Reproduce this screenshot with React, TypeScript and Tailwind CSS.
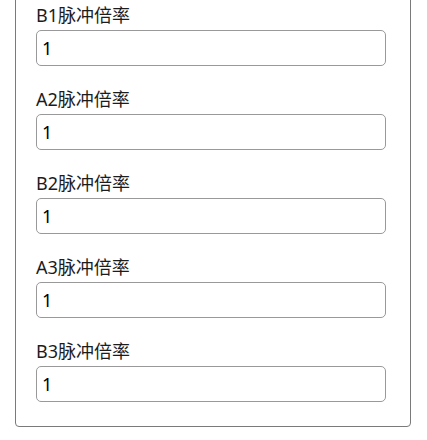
import { useState } from "react";

const fields = ["B1脉冲倍率", "A2脉冲倍率", "B2脉冲倍率", "A3脉冲倍率", "B3脉冲倍率"];

export default function App() {
  const [values, setValues] = useState<string[]>(fields.map(() => "1"));

  return (
    <div
      className="min-h-[440px] overflow-hidden bg-white px-[15px]"
      style={{ fontFamily: '"Noto Sans", "Noto Sans CJK SC", sans-serif' }}
    >
      <div className="-mt-5 w-[396px] rounded-[4px] border border-[#7a7a7a] pb-6 pl-5 pt-[22px]">
        {fields.map((label, i) => (
          <div key={label} className={i > 0 ? "mt-[21px]" : ""}>
            <div className="mb-[3px] text-[18px] leading-6 text-[#1c1c1c]">{label}</div>
            <input
              value={values[i]}
              onChange={(e) =>
                setValues((v) => v.map((x, j) => (j === i ? e.target.value : x)))
              }
              className="block h-9 w-[350px] rounded-[5px] border border-[#999] px-[5px] text-[18px] text-black outline-none"
            />
          </div>
        ))}
      </div>
    </div>
  );
}
